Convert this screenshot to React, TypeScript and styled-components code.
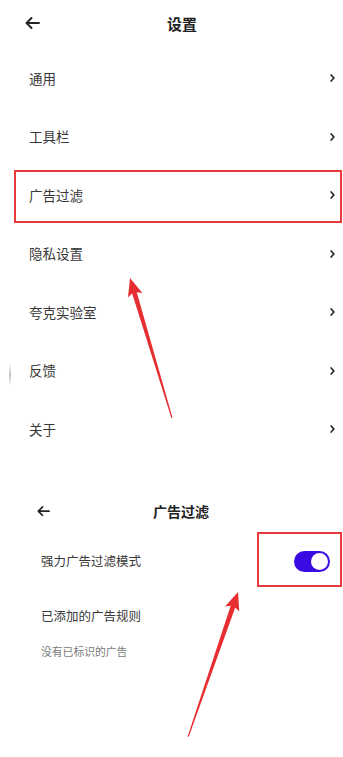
import React from "react";
import styled, { createGlobalStyle } from "styled-components";

const GlobalStyle = createGlobalStyle`
  html, body {
    margin: 0;
    padding: 0;
    background: #ffffff;
  }
  body {
    font-family: "Noto Sans CJK SC", "Noto Sans", sans-serif;
    color: #333333;
  }
`;

const Page = styled.div`
  position: relative;
  width: 343px;
  height: 757px;
  overflow: hidden;
  background: #ffffff;
`;

const Screen = styled.section<{ $top?: number }>`
  display: flex;
  flex-direction: column;
  padding-top: ${(p) => p.$top || 0}px;
`;

const Header = styled.header<{ $height: number; $left: number; $gap: number }>`
  display: flex;
  align-items: center;
  height: ${(p) => p.$height}px;
  padding-left: ${(p) => p.$left}px;
  gap: ${(p) => p.$gap}px;
`;

const BackButton = styled.span<{ $w: number }>`
  display: flex;
  width: ${(p) => p.$w}px;
  color: #222222;
`;

const Title = styled.h1<{ $size: number }>`
  margin: 0;
  font-size: ${(p) => p.$size}px;
  font-weight: 700;
  color: #222222;
  line-height: 1;
`;

const List = styled.ul<{ $top?: number }>`
  list-style: none;
  margin: 0;
  padding: ${(p) => p.$top || 0}px 0 0 0;
`;

const Row = styled.li<{ $height: number; $left: number }>`
  position: relative;
  display: flex;
  align-items: center;
  justify-content: space-between;
  height: ${(p) => p.$height}px;
  padding: 0 8px 0 ${(p) => p.$left}px;
  font-size: 13.5px;
  color: #333333;
`;

const Label = styled.span<{ $size?: number }>`
  font-size: ${(p) => p.$size || 13.5}px;
  line-height: 1;
  color: #383838;
`;

const Stack = styled.div`
  display: flex;
  flex-direction: column;
  gap: 23px;
`;

const Hint = styled.span`
  font-size: 10.8px;
  color: #7a7a7a;
  line-height: 1;
`;

const Highlight = styled.div<{ $top: number; $bottom: number; $left: number; $right: number }>`
  position: absolute;
  top: ${(p) => p.$top}px;
  bottom: ${(p) => p.$bottom}px;
  left: ${(p) => p.$left}px;
  right: ${(p) => p.$right}px;
  border: 2px solid #e8393b;
  pointer-events: none;
`;

const Toggle = styled.span<{ $on: boolean }>`
  position: relative;
  display: inline-block;
  width: 36px;
  height: 21px;
  margin-right: 5px;
  border-radius: 11px;
  background: ${(p) => (p.$on ? "#3a0be3" : "#cccccc")};
`;

const Knob = styled.span`
  position: absolute;
  top: 2px;
  right: 2px;
  width: 17px;
  height: 17px;
  border-radius: 50%;
  background: #ffffff;
  box-sizing: border-box;
`;

const Overlay = styled.svg`
  position: absolute;
  left: 0;
  top: 0;
  pointer-events: none;
`;

function BackArrow({ w }: { w: number }) {
  return (
    <svg width={w} height={w * 0.8} viewBox="0 0 15 12" fill="none">
      <path
        d="M14 6H1.5M6.5 1L1.5 6L6.5 11"
        stroke="currentColor"
        strokeWidth="1.9"
        strokeLinecap="round"
        strokeLinejoin="round"
      />
    </svg>
  );
}

function Chevron() {
  return (
    <svg width="5" height="8" viewBox="0 0 5 8" fill="none">
      <path d="M1.2 1L3.8 4L1.2 7" stroke="#2a2a2a" strokeWidth="1.7" strokeLinecap="round" />
    </svg>
  );
}

function Arrow({ x, y, length, angle }: { x: number; y: number; length: number; angle: number }) {
  const L = length;
  return (
    <polygon
      transform={`translate(${x} ${y}) rotate(${angle})`}
      points={`0,0 7.5,18 2.4,15.5 0.6,${L} -0.6,${L} -2.4,15.5 -7.5,18`}
      fill="#e62e31"
    />
  );
}

const settings = ["通用", "工具栏", "广告过滤", "隐私设置", "夸克实验室", "反馈", "关于"];

export default function App() {
  return (
    <>
      <GlobalStyle />
      <Page>
        <Screen>
          <Header $height={46} $left={25} $gap={127}>
            <BackButton $w={15}>
              <BackArrow w={15} />
            </BackButton>
            <Title $size={15}>设置</Title>
          </Header>
          <List $top={3}>
            {settings.map((name) => (
              <Row key={name} $height={58.5} $left={29}>
                <Label>{name}</Label>
                <Chevron />
                {name === "广告过滤" && <Highlight $top={4} $bottom={2} $left={14} $right={1} />}
              </Row>
            ))}
          </List>
        </Screen>

        <Screen $top={32}>
          <Header $height={41} $left={37} $gap={103}>
            <BackButton $w={13}>
              <BackArrow w={13} />
            </BackButton>
            <Title $size={14}>广告过滤</Title>
          </Header>
          <List>
            <Row $height={59} $left={41}>
              <Label $size={12.5}>强力广告过滤模式</Label>
              <Toggle $on>
                <Knob />
              </Toggle>
              <Highlight $top={0} $bottom={4} $left={257} $right={1} />
            </Row>
            <Row $height={86} $left={41}>
              <Stack>
                <Label $size={12.5}>已添加的广告规则</Label>
                <Hint>没有已标识的广告</Hint>
              </Stack>
            </Row>
          </List>
        </Screen>

        <Overlay width="343" height="757" viewBox="0 0 343 757">
          <defs>
            <linearGradient id="edge" x1="0" y1="0" x2="0" y2="1">
              <stop offset="0" stopColor="#d0d0d0" stopOpacity="0" />
              <stop offset="0.5" stopColor="#b8b8b8" stopOpacity="0.9" />
              <stop offset="1" stopColor="#d0d0d0" stopOpacity="0" />
            </linearGradient>
          </defs>
          <rect x="9" y="363" width="2" height="24" fill="url(#edge)" />
          <Arrow x={130} y={278} length={146} angle={-16.7} />
          <Arrow x={238} y={592} length={153} angle={19} />
        </Overlay>
      </Page>
    </>
  );
}
